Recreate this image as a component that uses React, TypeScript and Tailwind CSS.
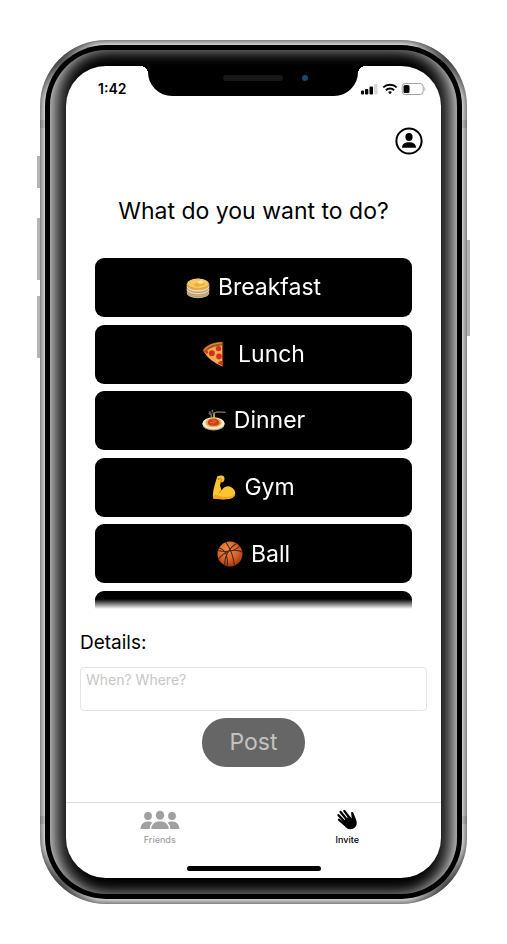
import type { ReactNode } from "react";

function Pancakes() {
  return (
    <svg viewBox="0 0 24 24" className="h-6 w-6" aria-hidden="true">
      <ellipse cx="12" cy="17.4" rx="11" ry="4.8" fill="#a9a49c" />
      <path d="M.8 8v8.5c0 7 22.4 7 22.4 0V8z" fill="#d6b98b" />
      <path d="M1 12c1 6 21 6 22 0M1 14.8c2 5.6 20 5.6 22 0M2 17.4c3 4.4 17 4.4 20 0" fill="none" stroke="#a08f74" strokeWidth=".7" />
      <path d="M1 10.6c1 5.6 21 5.6 22 0M1 13.4c2 5.6 20 5.6 22 0" fill="none" stroke="#f1dfb6" strokeWidth="1" />
      <ellipse cx="12" cy="8.2" rx="11.2" ry="5.6" fill="#e9a43c" />
      <ellipse cx="12" cy="7.5" rx="10.4" ry="4.7" fill="#fbc766" />
      <path d="M7 8.5c4-3 8 1 11-2l1 2c-3 2-6 1-8 3z" fill="#f4ad35" />
      <path d="M11 5.6l4-1.2 3 1.5-4 2z" fill="#ffe9a5" />
    </svg>
  );
}

function Pizza() {
  return (
    <svg viewBox="0 0 24 26" className="h-[26px] w-6" aria-hidden="true">
      <path d="M1.5 9.5L20.5 2v23.4C12 22 5 17 1.5 9.5z" fill="#f3ad4e" />
      <path d="M.6 10C4 4 12 .4 20.6.8l.4 3.6C13 4.6 6 7.5 3 12z" fill="#a9571b" />
      <path d="M2 9C6 4.4 13 2 20.4 2" fill="none" stroke="#dc8e37" strokeWidth="1.2" />
      <path d="M20.6 1v24.6" stroke="#8c3c14" strokeWidth="1.2" />
      <g fill="#d42f20">
        <circle cx="9.8" cy="12.3" r="3" />
        <circle cx="16.5" cy="7.6" r="2.7" />
        <circle cx="17" cy="15.4" r="2.8" />
        <path d="M20 20v4.6l-4-2c0-2 2-3 4-2.6zM3 10.6l2.6-1.2c1 2 0 3.6-1 3.7z" />
      </g>
    </svg>
  );
}

function Spaghetti() {
  return (
    <svg viewBox="0 0 25 24" className="h-6 w-6" aria-hidden="true">
      <ellipse cx="12" cy="15.5" rx="11.5" ry="6.5" fill="#b9aa8c" />
      <ellipse cx="12" cy="14.3" rx="11.5" ry="6.3" fill="#f3ead2" />
      <ellipse cx="12" cy="13.8" rx="8.5" ry="4.7" fill="#e5b54d" />
      <path d="M6 14c0-3 3-4.5 6-4.5s6.200 2 6.200 4.500c0 4-12.200 4-12.200 0z" fill="#d43b1b" />
      <path d="M8.500 14c2-2 3 1 5-.5M11 11.500l4 1" stroke="#f06a32" strokeWidth="1.2" fill="none" />
      <path d="M9.800 10.500L9.400 4M11.500 10.500l.8-7M13.200 10l-.5-7" stroke="#dca73b" strokeWidth="1" />
      <path d="M9 3.500L7.500 2M9 5L7 4M11 3l-.5-2.500M11 4.200l5-1.700 8.500.5" stroke="#777b78" strokeWidth="1.4" fill="none" />
    </svg>
  );
}

function Biceps() {
  return (
    <svg viewBox="0 0 24 25" className="h-[25px] w-6" aria-hidden="true">
      <path d="M5.200 1.600C7.500.3 10.500.2 11.700 1.200c1.200 1.200 1 4-.1 5.200-.8 1-2 1-2.800.7L8 10.500l1.600 5c2.400-4 6-5 9.200-3.600 3 1.300 4.600 4 4.400 6.600-.2 3.600-3.400 5.500-8 5.800-4.600.3-10-.1-14.200-.8-.4-4 .3-9 1.700-13.500z" fill="#fcc52f" />
      <path d="M1 23.500c8 1.500 21 1.500 22.200-5-3 4-11 4.400-17 2-2-.8-3.500-.8-5.200.5z" fill="#efa11c" />
      <path d="M9.600 15.500c-1.200.4-2 1.400-2.300 2.500M6 4.500c1.500-1 3-1 4 .1L8.500 7M6 3l.5 1.500" fill="none" stroke="#b97814" strokeWidth=".9" />
    </svg>
  );
}

function Basketball() {
  return (
    <svg viewBox="0 0 26 26" className="h-[26px] w-[26px]" aria-hidden="true">
      <defs>
        <radialGradient id="ball" cx="40%" cy="30%" r="70%">
          <stop offset="0" stopColor="#ef8a48" />
          <stop offset=".6" stopColor="#d96428" />
          <stop offset="1" stopColor="#a33c10" />
        </radialGradient>
      </defs>
      <circle cx="13" cy="13" r="12.5" fill="url(#ball)" />
      <path d="M9 1.200c4 6 7.500 14 8.500 23.400M1 9.500c8 2 17 1 21.500-4.500M1.500 18C9 9 18 7.500 25.200 11M8 24.500c-1-7 3-17 11.500-22M2 7c6 1 9 8 8.500 18" fill="none" stroke="#4a2416" strokeWidth="1.1" />
    </svg>
  );
}

const activities: { name: string; icon: ReactNode; gap: string }[] = [
  { name: "Breakfast", icon: <Pancakes />, gap: "gap-2" },
  { name: "Lunch", icon: <Pizza />, gap: "gap-3" },
  { name: "Dinner", icon: <Spaghetti />, gap: "gap-2" },
  { name: "Gym", icon: <Biceps />, gap: "gap-2" },
  { name: "Ball", icon: <Basketball />, gap: "gap-2" },
];

const activityButton =
  "flex h-[59px] w-full items-center justify-center rounded-[9px] bg-black text-[23px] text-white";

function StatusBar() {
  return (
    <header className="flex h-[45px] items-center justify-between pr-[15px] pl-8">
      <span className="text-sm font-semibold">1:42</span>
      <svg viewBox="0 0 65 14" className="h-[14px] w-[65px]" aria-label="Signal, Wi-Fi and battery">
        <rect x="0" y="8.5" width="3" height="4" rx="1" />
        <rect x="4" y="7" width="3.300" height="5.500" rx="1" />
        <rect x="8.500" y="4.500" width="3.500" height="8" rx="1" />
        <rect x="13" y="2" width="3.500" height="10.500" rx="1" fill="#d8d8d8" />
        <path d="M22.300 5.400a9.600 9.600 0 0 1 13.400 0M24.900 8.200a5.800 5.800 0 0 1 8.200 0" fill="none" stroke="#000" strokeWidth="2" />
        <path d="M29 12.300l-2-2.200a3 3 0 0 1 4 0z" />
        <rect x="41.200" y="1.500" width="21" height="11" rx="3" fill="none" stroke="#a3a3a3" />
        <rect x="42.500" y="3" width="6" height="8" rx="1.500" />
        <path d="M63.500 5v4c1.300-.6 1.300-3.400 0-4z" fill="#a3a3a3" />
      </svg>
    </header>
  );
}

function FriendsIcon() {
  return (
    <svg viewBox="0 0 40 20" className="h-5 w-10" fill="#a0a0a0" aria-hidden="true">
      <circle cx="8" cy="6" r="3.9" />
      <circle cx="32" cy="6" r="3.9" />
      <path d="M.5 19c0-5 3.500-7.500 7.500-7.500 1.800 0 3.200.4 4.400 1.200C10.400 14.200 9.600 16.500 9.700 19zM39.500 19c0-5-3.500-7.500-7.500-7.500-1.800 0-3.200.4-4.400 1.200 2 1.500 2.800 3.800 2.700 6.300z" />
      <ellipse cx="20" cy="5.200" rx="4.200" ry="4.500" />
      <path d="M11.300 19c0-5 4-7.800 8.700-7.800s8.700 2.800 8.700 7.800z" />
    </svg>
  );
}

function WaveIcon() {
  return (
    <svg viewBox="0 0 22 22" className="h-[22px] w-[22px]" aria-hidden="true">
      <path d="M6 13.300L13.500 6.800l2 2.700c.4-1.600-.3-3.600-.4-5.200-.1-1.500 1.700-1.900 2.400-.4l2.500 6.600c1.700 4.200.4 7.500-2.500 9-2.700 1.300-5.800.9-7.900-1.200z" />
      <path d="M9 15.800L2.900 10.700M9.500 13.500L2.500 6.200M11.500 11.500L4.600 3M14 9.500L8.300 1.900" fill="none" stroke="#000" strokeWidth="2.300" strokeLinecap="round" />
    </svg>
  );
}

function Screen() {
  return (
    <main className="relative z-10 flex min-h-[812px] w-full flex-col overflow-hidden rounded-[40px] bg-white text-black">
      <StatusBar />
      <div className="flex justify-end px-[18px] pt-4">
        <button type="button" aria-label="Profile" className="h-7 w-7">
          <svg viewBox="0 0 28 28" className="h-7 w-7" aria-hidden="true">
            <circle cx="14" cy="14" r="12.6" fill="none" stroke="#000" strokeWidth="2" />
            <ellipse cx="14" cy="9.900" rx="3.600" ry="4" />
            <path d="M7 20.800c0-3.800 3-5.500 7-5.500s7 1.700 7 5.500z" />
          </svg>
        </button>
      </div>
      <h1 className="mt-10 text-center text-[23px] leading-8">What do you want to do?</h1>
      <div className="mt-[31px] h-[351px] overflow-hidden px-[29px] [mask-image:linear-gradient(to_bottom,black_341px,transparent_351px)]">
        <ul className="flex h-[392px] flex-col justify-between">
          {activities.map((activity) => (
            <li key={activity.name}>
              <button type="button" className={`${activityButton} ${activity.gap}`}>
                {activity.icon}
                {activity.name}
              </button>
            </li>
          ))}
          <li>
            <button type="button" aria-label="More activities" className={activityButton} />
          </li>
        </ul>
      </div>
      <form className="flex flex-col px-[14px] pt-5" onSubmit={(event) => event.preventDefault()}>
        <label htmlFor="details" className="text-[19px] leading-7">
          Details:
        </label>
        <textarea
          id="details"
          placeholder="When? Where?"
          className="mt-[10px] h-11 w-full resize-none rounded border border-[#e4e4e4] px-[5px] py-[2px] text-sm placeholder:text-[#c6c6c6]"
        />
        <button type="submit" className="mt-[7px] h-[49px] self-center rounded-[24px] bg-[#666666] px-[27px] text-[23px] text-[#c2c2c2]">
          Post
        </button>
      </form>
      <nav className="mt-auto flex h-[76px] flex-col border-t border-[#dcdcdc]">
        <div className="grid grid-cols-2 text-[9px] leading-3">
          <button type="button" className="flex flex-col items-center gap-1 pt-[7px] font-medium text-[#a0a0a0]">
            <FriendsIcon />
            Friends
          </button>
          <button type="button" className="flex flex-col items-center gap-[3px] pt-[6px] font-medium">
            <WaveIcon />
            Invite
          </button>
        </div>
        <div className="mx-auto mt-auto mb-[7px] h-[5px] w-[134px] rounded-full bg-black" />
      </nav>
    </main>
  );
}

const cornerShade =
  "absolute h-[90px] w-[90px] rounded-full bg-[radial-gradient(ellipse_at_center,rgba(0,0,0,0.6)_0%,rgba(255,255,255,0)_60%)]";

function Bezel() {
  return (
    <div aria-hidden="true">
      <div className="absolute -left-[3px] top-[116px] h-8 w-[3px] bg-[#b5b5b5]" />
      <div className="absolute -left-[3px] top-[178px] h-[62px] w-[3px] bg-[#b5b5b5]" />
      <div className="absolute -left-[3px] top-[256px] h-[62px] w-[3px] bg-[#b5b5b5]" />
      <div className="absolute -right-[3px] top-[200px] h-24 w-[3px] bg-[#b5b5b5]" />
      <div className="absolute inset-0 overflow-hidden rounded-[66px]">
        <div className={`${cornerShade} -left-5 -top-5`} />
        <div className={`${cornerShade} -right-5 -top-5`} />
        <div className={`${cornerShade} -bottom-5 -left-5`} />
        <div className={`${cornerShade} -bottom-5 -right-5`} />
      </div>
      <div className="absolute inset-x-0 top-20 h-2 bg-black/10" />
      <div className="absolute inset-x-0 bottom-20 h-2 bg-black/10" />
      <div className="absolute inset-[5px] rounded-[61px] bg-black" />
      <div className="absolute inset-[10px] overflow-hidden rounded-[56px] shadow-[inset_0_0_15px_0_rgba(255,255,255,0.66)]">
        <div className="absolute -top-[8%] left-0 h-[116%] w-full rounded-[200px/112px] shadow-[inset_0_0_30px_0_#ffffff]" />
      </div>
      <div className="absolute left-[108px] right-[109px] top-[26px] z-20 h-[30px] rounded-b-[24px] bg-black">
        <div className="absolute -left-2 top-0 h-2 w-2 bg-[radial-gradient(circle_at_bottom_left,transparent_0,transparent_70%,black_70%,black_100%)]" />
        <div className="absolute -right-2 top-0 h-2 w-2 bg-[radial-gradient(circle_at_bottom_right,transparent_0,transparent_70%,black_70%,black_100%)]" />
        <div className="absolute left-[75px] top-[9px] h-[6px] w-[60px] rounded-[6px] bg-[#171818]" />
        <div className="absolute left-[154px] top-[9px] h-[6px] w-[6px] rounded-full bg-[#0d4d71]" />
      </div>
    </div>
  );
}

export default function App() {
  return (
    <div className="bg-white p-10 font-['Inter','Liberation_Sans',sans-serif]">
      <div className="relative mx-auto w-full max-w-[427px] rounded-[66px] bg-[#fdfdfd] p-[26px] shadow-[inset_0_0_11px_0_black]">
        <Bezel />
        <Screen />
      </div>
    </div>
  );
}
